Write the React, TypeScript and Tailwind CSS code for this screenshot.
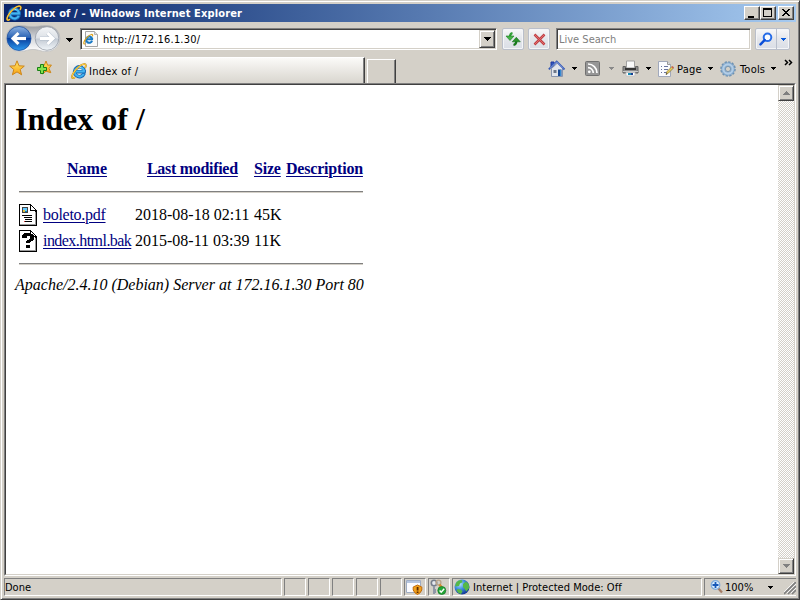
import React from "react";

const UI_BASE = "font-['DejaVu_Sans_Condensed','Noto_Sans',sans-serif] text-[11px] leading-[14px] whitespace-pre relative top-px";
const UI = `${UI_BASE} text-black`;

function IELogo({ size = 16, className = "" }: { size?: number; className?: string }) {
  return (
    <svg width={size} height={size} viewBox="0 0 16 16" className={`shrink-0 ${className}`}>
      <path d="M13.1 10.4A4.9 4.9 0 1 1 13.3 7.8L13.2 8.8H4.900" fill="none" stroke="#1769b5" strokeWidth="3.500" />
      <path d="M12.700 10.800A4.700 4.700 0 1 1 13 7.800L12.900 8.500H5" fill="none" stroke="#43b5f0" strokeWidth="2" />
      <path d="M5.100 6.200a3.500 3.500 0 0 1 5.200-1.500" fill="none" stroke="#a4e3ff" />
      <path d="M4 14.200C1.400 16.500 0 14.600 2.100 10.600 5 5.200 10.800.4 13.800 1.200c1.700.5 1 2.300.2 3.800" fill="none" stroke="#ae7a14" strokeWidth="1.800" />
      <path d="M4 14.200C1.400 16.500 0 14.600 2.100 10.600 5 5.200 10.800.4 13.800 1.200c1.700.5 1 2.300.2 3.800" fill="none" stroke="#ffd044" strokeWidth="1.100" />
    </svg>
  );
}

function PageLogo() {
  return (
    <svg width="16" height="16" viewBox="0 0 16 16" className="shrink-0">
      <path d="M2.500.5h9l3 3v12h-12z" fill="#fafafa" stroke="#a4a4a4" />
      <path d="M11.500.5v3h3" fill="#ddd" stroke="#b4b4b4" />
      <path d="M9.100 9.900A3.100 3.100 0 1 1 9.200 7.800l-.1.5H4" fill="none" stroke="#1979c5" strokeWidth="2" />
      <path d="M2.200 12.800C-.5 14 1 9.500 4 6.300 7.500 2.800 10.500 2.600 9.400 5.400" fill="none" stroke="#dea31b" strokeWidth="1.200" />
    </svg>
  );
}

function Arrow({ color = "#000", w = 7, className = "" }: { color?: string; w?: number; className?: string }) {
  const h = (w + 1) / 2;
  return (
    <svg width={w} height={h} viewBox={`0 0 ${w} ${h}`} className={`shrink-0 ${className}`} shapeRendering="crispEdges">
      <path d={`M0 0H${w}L${w / 2} ${h}z`} fill={color} />
    </svg>
  );
}

function NavButtons() {
  return (
    <svg width="56" height="30" viewBox="0 0 56 30" className="shrink-0">
      <defs>
        <linearGradient id="navBlue" x2="0" y2="1">
          <stop stopColor="#8cb1e1" /><stop offset=".47" stopColor="#2862b5" /><stop offset=".5" stopColor="#083f9e" /><stop offset="1" stopColor="#2e9cf0" />
        </linearGradient>
        <linearGradient id="navGray" x2="0" y2="1">
          <stop stopColor="#f3f5f7" /><stop offset=".48" stopColor="#dde1e6" /><stop offset=".52" stopColor="#c3cad3" /><stop offset="1" stopColor="#f1f6fa" />
        </linearGradient>
        <linearGradient id="navRim" x2="0" y2="1">
          <stop stopColor="#999b9f" /><stop offset=".5" stopColor="#d5d8dc" /><stop offset="1" stopColor="#fff" />
        </linearGradient>
      </defs>
      <path d="M14 1.500C21 1.500 22 2.500 28 2.500S35 1.500 42 1.500a13 13 0 0 1 0 26C35 27.500 34 25.500 28 25.500s-7 2-14 2a13 13 0 0 1 0-26z" fill="url(#navRim)" stroke="#b8b9ba" strokeWidth=".7" />
      <circle cx="14" cy="14.500" r="12" fill="url(#navBlue)" stroke="#1e4f9d" strokeWidth=".8" />
      <circle cx="42" cy="14.500" r="11.800" fill="url(#navGray)" stroke="#949ba4" strokeWidth=".8" />
      <path d="M21 14.500H8.500M13.500 9L8 14.500l5.500 5.500M35 14.500H47.500M42.500 9l5.500 5.500-5.500 5.500" fill="none" stroke="#8295af" strokeWidth="4" opacity=".35" />
      <path d="M21 14.500H9M13.500 9L8 14.500l5.500 5.500M35 14.500H47M42.500 9l5.500 5.500-5.500 5.500" fill="none" stroke="#fff" strokeWidth="3" />
    </svg>
  );
}

function Star({ add = false }: { add?: boolean }) {
  return (
    <svg width="16" height="16" viewBox="0 0 16 16" className="shrink-0">
      <defs><linearGradient id="gold" x2="0" y2="1"><stop stopColor="#ffe96a" /><stop offset="1" stopColor="#f8a010" /></linearGradient></defs>
      <path d={add ? "M10 1l1.600 4.200 3.800-.2-2.400 3.500 1.800 4.200-4.800-1.500L6.500 14 7 9.500 4 6l4.300-.8z" : "M8 .8l2 5 5.300.3-4.100 3.400 1.400 5.300L8 11.900l-4.600 2.900 1.400-5.300L.7 6.100 6 5.800z"} fill="url(#gold)" stroke="#cd861b" strokeLinejoin="round" />
      {add && <path d="M4.500 4.500h3v3h3v3h-3v3h-3v-3h-3v-3h3z" fill="#80e34d" stroke="#198016" />}
    </svg>
  );
}

function House() {
  return (
    <svg width="18" height="18" viewBox="0 0 18 18" className="shrink-0">
      <path d="M3 2h3v5H3z" fill="#3157c0" stroke="#2039a0" />
      <path d="M3.500 8.500L9.500 3l5 5v8.500h-11z" fill="#e2e5ec" stroke="#8995ad" />
      <path d="M.8 9.300L8.700 1.500l7.800 8" fill="none" stroke="#375bb6" strokeWidth="1.800" />
      <path d="M2 8.300L8.700 2l6.500 6.600" fill="none" stroke="#a9baec" strokeWidth=".7" />
      <path d="M5.500 10h3v3h-3z" fill="#6d7789" /><path d="M10 9.500h3.500V16H10z" fill="#164994" />
      <path d="M12 10h1v6h-1z" fill="#378bd2" />
    </svg>
  );
}

function Feed({ className = "" }: { className?: string }) {
  return (
    <svg width="15" height="15" viewBox="0 0 15 15" className={`shrink-0 ${className}`}>
      <rect x=".5" y=".5" width="14" height="14" rx="1" fill="#969696" stroke="#717171" />
      <circle cx="4.300" cy="10.800" r="1.400" fill="#fff" />
      <path d="M3 6.700a5.300 5.300 0 0 1 5.300 5.300M3 3a9 9 0 0 1 9 9" fill="none" stroke="#fff" strokeWidth="1.700" />
    </svg>
  );
}

function Printer({ className = "" }: { className?: string }) {
  return (
    <svg width="17" height="17" viewBox="0 0 17 17" className={`shrink-0 ${className}`}>
      <path d="M4.500 1h8v7h-8z" fill="#fafafa" stroke="#a1a1a1" />
      <path d="M1 6.500h2.500V9h10V6.500H16V13H1z" fill="#8c8c8c" stroke="#646464" />
      <path d="M3 8h11v2H3z" fill="#363636" /><path d="M1 11.500h15" stroke="#cacaca" />
      <path d="M4 12.500h9V16H4z" fill="#fff" stroke="#c2c2c2" />
      <path d="M6 13h3v2H6z" fill="#178db4" /><path d="M9 13h2v2H9z" fill="#1c3f91" />
    </svg>
  );
}

function PageEdit({ className = "" }: { className?: string }) {
  return (
    <svg width="16" height="16" viewBox="0 0 16 16" className={`shrink-0 ${className}`}>
      <path d="M.5.500h9l3 3v12h-12z" fill="#fafbff" stroke="#a1a9bc" /><path d="M9.500.500v3h3" fill="#ddd" stroke="#999" />
      <path d="M3 5.500h1m2 0h4M3 8.500h1m2 0h4M3 11.500h1m2 0h3" stroke="#69749c" />
      <path d="M8 13.500l1-3 5-5 1.500 1.500-5 5z" fill="#e8ce58" stroke="#8c7842" strokeWidth=".8" /><path d="M13.500 6L15 7.500l.8-1.300-1-1z" fill="#d8544a" /><path d="M8 13.500l.4-1.200.9.700z" fill="#222" />
    </svg>
  );
}

function Gear({ className = "" }: { className?: string }) {
  return (
    <svg width="16" height="16" viewBox="0 0 16 16" className={`shrink-0 ${className}`}>
      <circle cx="8" cy="8" r="6.800" fill="none" stroke="#6e90b0" strokeWidth="2" strokeDasharray="2.300 1.260" />
      <circle cx="8" cy="8" r="4.700" fill="#d4d0c8" stroke="#7fa6cb" strokeWidth="4" />
      <circle cx="8" cy="8" r="4.700" fill="none" stroke="#b3cde6" strokeWidth="2.200" />
      <circle cx="8" cy="8" r="2.600" fill="#d4d0c8" stroke="#6689aa" strokeWidth=".8" />
    </svg>
  );
}

function CaptionButton({ kind, className = "" }: { kind: "min" | "max" | "close"; className?: string }) {
  return (
    <div className={`w-4 h-3.5 bg-[#d4d0c8] border border-t-white border-l-white border-r-[#404040] border-b-[#404040] shadow-[inset_-1px_-1px_#808080] ${className}`}>
      <svg width="14" height="12" viewBox="0 0 14 12" shapeRendering="crispEdges" className="block">
        {kind === "min" && <path d="M3 9h6v2H3z" />}
        {kind === "max" && <path d="M2 1h9v9H2zM3 3v6h7V3z" fillRule="evenodd" />}
        {kind === "close" && <path d="M3 2h2v1h1v1h2V3h1V2h2v1h-1v1H9v1H8v1h1v1h1v1h1v1H9V8H8V7H6v1H5v1H3V8h1V7h1V6h1V5H5V4H4V3H3z" />}
      </svg>
    </div>
  );
}

function ClassicButton({ children, className = "h-4" }: { children?: React.ReactNode; className?: string }) {
  return <div className={`w-4 shrink-0 flex items-center justify-center bg-[#d4d0c8] border border-[#d4d0c8] border-r-[#404040] border-b-[#404040] shadow-[inset_1px_1px_#fff,inset_-1px_-1px_#808080] ${className}`}>{children}</div>;
}

const GLASS = "bg-linear-to-b from-[#f8f8f9] via-[#e4e6eb] via-50% to-[#dadee6] border border-[#babfca] rounded-[2px] shadow-[inset_0_0_0_1px_#f4f5f7]";

function FileIcon({ unknown = false }: { unknown?: boolean }) {
  return (
    <svg width="20" height="22" viewBox="0 0 20 22" shapeRendering="crispEdges" className="shrink-0">
      <path d="M1 0h12v1h1v1h1v1h1v1h1v1h1v1h1v16H1z" fill="#000" />
      <path d="M2 1h10v6h5v13H2z" fill="#fff" /><path d="M13 2v4h4V5h-1V4h-1V3h-1V2z" fill="#fff" />
      <path d="M2 20h16v1H2zM17 8h1v13h-1z" fill="#999" />
      {unknown ? (
        <path d="M6 3h7v1h2v1h1v5h-1v1h-2v1h-1v1H8v-2h1v-1h2V9h1V6H9v2H4V5h1V4h1zM8 15h4v3H8z" />
      ) : (
        <g><path d="M4 3h6v6H4z" fill="#444" /><path d="M5 4h4v3H5z" fill="#67caff" /><path d="M5 6h2v2H5z" fill="#e2c33f" /><path d="M7 7h2v1H7z" fill="#0879b0" /><path d="M4 11h10v1H4zM6 13h8v1H6zM7 15h7v1H7zM7 17h7v1H7z" /><path d="M6 17h1v1H6z" fill="#d33" /></g>
      )}
    </svg>
  );
}

const PANE = "h-[18px] shrink-0 border border-t-[#808080] border-l-[#808080] border-r-white border-b-white flex items-center";
const LINK = "text-[#000080] underline decoration-1 underline-offset-2 whitespace-nowrap justify-self-start";
const ROW = "grid grid-cols-[24px_92px_119px_32px_78px] whitespace-nowrap";

function TitleBar() {
  return (
    <div className="h-[18px] shrink-0 flex items-center bg-linear-to-r from-[#0a246a] to-[#a6caf0] pl-0.5 pr-0.5">
      <IELogo />
      <span className="ml-[2px] grow font-['DejaVu_Sans_Condensed','Noto_Sans',sans-serif] text-[11px] leading-[14px] font-bold text-white whitespace-pre tracking-[0.13px] relative top-px">Index of / - Windows Internet Explorer</span>
      <CaptionButton kind="min" /><CaptionButton kind="max" /><CaptionButton kind="close" className="ml-0.5" />
    </div>
  );
}

function AddressRow() {
  return (
    <div className="h-8 shrink-0 flex items-start pl-px pt-[2px]">
      <NavButtons />
      <Arrow className="mt-[14px] ml-[5px]" />
      <div className="ml-[7px] mt-[4px] w-[417px] h-[22px] flex items-center bg-white border border-t-[#808080] border-l-[#808080] border-r-white border-b-white shadow-[inset_1px_1px_#404040,inset_-1px_-1px_#d4d0c8] pl-[2px] pr-px">
        <PageLogo />
        <span className={`${UI} ml-1 grow tracking-[0.2px]`}>http://172.16.1.30/</span>
        <ClassicButton className="h-[18px]"><Arrow /></ClassicButton>
      </div>
      <div className={`ml-[5px] mt-[4px] w-[22px] h-[22px] flex items-center justify-center ${GLASS}`}>
        <svg width="16" height="16" viewBox="0 0 16 16">
          <path d="M7.500 2Q5 2.500 5 6" fill="none" stroke="#2f9e35" strokeWidth="2.200" />
          <path d="M1 5h8l-4 4.500z" fill="#45b545" stroke="#187a20" strokeWidth=".6" />
          <path d="M8.500 14Q11.300 13.500 11.300 10" fill="none" stroke="#17781d" strokeWidth="2.200" />
          <path d="M7.300 10.800h8l-4-4.500z" fill="#2b932b" stroke="#116b1d" strokeWidth=".6" />
        </svg>
      </div>
      <div className={`ml-1 mt-[4px] w-[22px] h-[22px] flex items-center justify-center ${GLASS}`}>
        <svg width="13" height="13" viewBox="0 0 13 13"><path d="M1.500 1.500l10 10m0-10l-10 10" stroke="#bd4147" strokeWidth="2.500" /><path d="M1.500 1.500l10 10m0-10l-10 10" stroke="#e56a6a" strokeWidth="1" /></svg>
      </div>
      <div className="ml-1.5 mt-[4px] w-[195px] h-[22px] flex items-center bg-white border border-t-[#808080] border-l-[#808080] border-r-white border-b-white shadow-[inset_1px_1px_#404040,inset_-1px_-1px_#d4d0c8] pl-[2px]">
        <span className={`${UI_BASE} text-[#808080]`}>Live Search</span>
      </div>
      <div className={`ml-1 mt-[4px] w-[35px] h-[22px] flex ${GLASS}`}>
        <div className="w-[21px] h-full flex items-center justify-center border-r border-[#b8bfcc]">
          <svg width="14" height="14" viewBox="0 0 14 14"><circle cx="8.500" cy="5.300" r="3.800" fill="#f8fbff" stroke="#266ce7" strokeWidth="2" /><path d="M5.600 8.200L1.500 12.300" stroke="#0a4ed8" strokeWidth="2.500" strokeLinecap="round" /></svg>
        </div>
        <div className="grow flex items-center justify-center"><Arrow w={5} color="#0759dc" /></div>
      </div>
    </div>
  );
}

function TabRow() {
  return (
    <div className="h-[29px] shrink-0 flex items-start pl-[5px]">
      <div className="pt-[6px]"><Star /></div>
      <div className="pt-[6px] ml-[11px]"><Star add /></div>
      <div className="ml-[15px] mt-[3px] w-[298px] h-[26px] flex items-center bg-linear-to-b from-[#fbfaf8] to-[#d9d6cf] border-t border-l border-white border-r border-r-[#404040] shadow-[inset_-1px_0_#808080] pl-[3px] pt-px">
        <IELogo /><span className={`${UI} ml-0.5 tracking-[0.3px]`}>Index of /</span>
      </div>
      <div className="ml-[2px] mt-[5px] w-[29px] h-[24px] border-t border-l border-white border-r border-r-[#404040] shadow-[inset_-1px_0_#808080] bg-[#d4d0c8]" />
      <div className="grow flex items-center h-[29px] justify-end pr-[3px]">
        <House /><Arrow w={5} className="ml-[6px]" />
        <Feed className="ml-[8px]" /><Arrow w={5} color="#898989" className="ml-[9px]" />
        <Printer className="ml-[8px]" /><Arrow w={5} className="ml-[7px]" />
        <PageEdit className="ml-[7px]" /><span className={`${UI} ml-[3px] w-[25px] tracking-[0.2px]`}>Page</span><Arrow w={5} className="ml-[6px]" />
        <Gear className="ml-[7px]" /><span className={`${UI} ml-[4px] w-[26px] tracking-[0.2px]`}>Tools</span><Arrow w={5} className="ml-[5px]" />
        <svg width="9" height="7" viewBox="0 0 9 7" className="ml-[8px] mb-[13px]"><path d="M1 1l2.500 2.500L1 6m4-5l2.500 2.500L5 6" fill="none" stroke="#000" strokeWidth="1.500" /></svg>
      </div>
    </div>
  );
}

function Listing() {
  return (
    <div className="grow bg-white text-black font-['Liberation_Serif',serif] text-[16px] leading-[18px] pl-[9px]">
      <h1 className="mt-[15px] h-[38px] text-[32px] leading-[38px] font-bold">Index of /</h1>
      <div className={`${ROW} font-bold ml-[4px] mt-[22px]`}>
        <span /><a className={`${LINK} ml-6`}>Name</a><a className={`${LINK} ml-3 tracking-[-0.3px]`}>Last modified</a><a className={`${LINK} tracking-[-0.2px]`}>Size</a><a className={`${LINK} tracking-[-0.2px]`}>Description</a>
      </div>
      <div className="ml-[4px] mt-[13px] w-[344px] h-[2px] border-t border-t-[#808080] border-b border-b-[#d4d0c8]" />
      <div className={`${ROW} ml-[3px] mt-[11px] h-[22px] items-center`}>
        <FileIcon /><a className={`${LINK} ml-px tracking-[-0.28px]`}>boleto.pdf</a><span className="ml-px">2018-08-18 02:11</span><span className="ml-px">45K</span>
      </div>
      <div className={`${ROW} ml-[3px] mt-1 h-[22px] items-center`}>
        <FileIcon unknown /><a className={`${LINK} ml-px tracking-[-0.55px]`}>index.html.bak</a><span className="ml-px">2015-08-11 03:39</span><span className="ml-px">11K</span>
      </div>
      <div className="ml-[4px] mt-[11px] w-[344px] h-[2px] border-t border-t-[#808080] border-b border-b-[#d4d0c8]" />
      <address className="italic mt-[11px] whitespace-nowrap">Apache/2.4.10 (Debian) Server at 172.16.1.30 Port 80</address>
    </div>
  );
}

function StatusBar() {
  return (
    <div className="h-[22px] shrink-0 pt-[2px] flex gap-[2px]">
      <div className={`${PANE} w-[278px]`}><span className={UI}>Done</span></div>
      {[0, 1, 2, 3, 4].map((i) => <div key={i} className={`${PANE} w-[22px]`} />)}
      <div className={`${PANE} w-[22px]`}>
        <svg width="19" height="16" viewBox="0 0 19 16" className="shrink-0"><path d="M1.500 1.500h14v12h-14z" fill="#fcfcff" stroke="#9fadc4" /><path d="M2 2h13v2H2z" fill="#b7c6df" /><path d="M12.500 6l4.300 2v3q-1 3-4.300 4.500-3.300-1.500-4.300-4.500V8z" fill="#f0a01b" stroke="#c16a0a" /><path d="M11.700 8h1.800v3.500h-1.800zM11.700 12.500h1.800V14h-1.800z" fill="#5c2900" /></svg>
      </div>
      <div className={`${PANE} w-[22px]`}>
        <svg width="18" height="16" viewBox="0 0 18 16" className="shrink-0"><circle cx="5" cy="4" r="2.700" fill="#e5e8ef" stroke="#777e8d" strokeWidth="1.600" /><path d="M5 7v8m0-4h2m-2 2h2" stroke="#8f96a6" strokeWidth="1.900" /><circle cx="9.500" cy="3.500" r="2.400" fill="none" stroke="#b9a48c" strokeWidth="1.400" /><path d="M10.500 5.500l3.500 5" stroke="#d28d31" strokeWidth="2.600" /><circle cx="12.800" cy="11.500" r="4" fill="#24a638" stroke="#137523" strokeWidth=".7" /><path d="M10.600 11.500l1.600 1.700 3-3.500" fill="none" stroke="#fff" strokeWidth="1.400" /></svg>
      </div>
      <div className={`${PANE} w-[250px] pl-px`}>
        <svg width="16" height="16" viewBox="0 0 16 16" className="shrink-0"><defs><radialGradient id="globe" cx=".35" cy=".3" r=".7"><stop stopColor="#b9e5ff" /><stop offset=".5" stopColor="#3f8fe0" /><stop offset="1" stopColor="#163c98" /></radialGradient></defs><circle cx="8" cy="8" r="7.500" fill="url(#globe)" /><path d="M2.500 3q3-2.500 5.500-1.800l.5 2-2.500 1.300-1 2.500-3.500.5-.3-1zM9 5l3-2.500 2.700 2.500.6 4-3 3.500-2-3L9 8zM3.500 10l3.500.5 1.500 2-1.500 2.500Q3.500 14 2.500 11.500z" fill="#56b847" /></svg>
        <span className={`${UI} ml-[3px] tracking-[0.04px]`}>Internet | Protected Mode: Off</span>
      </div>
      <div className={`${PANE} w-[92px] pl-[5px] border-r-0`}>
        <svg width="13" height="14" viewBox="0 0 13 14" className="shrink-0"><path d="M8 8l4 4.500" stroke="#a47b63" strokeWidth="2.200" /><circle cx="5.500" cy="5" r="4.300" fill="#d9edff" stroke="#7eacdc" strokeWidth="1.200" /><path d="M5.500 2v6M2.500 5h6" stroke="#1658b7" strokeWidth="1.800" /></svg>
        <span className={`${UI} ml-[2px] w-[30px]`}>100%</span><Arrow w={5} className="ml-[13px]" />
        <svg width="12" height="13" viewBox="0 0 12 13" className="ml-auto self-end"><path d="M0 12L12 0M4 12l8-8M8 12l4-4" stroke="#808080" strokeWidth="1.700" /><path d="M-1 11L11-1M3 11l9-9M7 11l5-5" stroke="#fff" strokeWidth=".8" /></svg>
      </div>
    </div>
  );
}

export default function App() {
  return (
    <main className="w-[800px] h-[600px] overflow-hidden bg-[#d4d0c8] border border-[#d4d0c8] border-r-[#404040] border-b-[#404040] shadow-[inset_1px_1px_#fff,inset_-1px_-1px_#808080] px-[3px] pt-[3px] pb-px flex flex-col">
      <TitleBar /><AddressRow /><TabRow />
      <div className="h-[493px] shrink-0 border border-t-[#808080] border-l-[#808080] border-r-white border-b-white">
        <div className="h-full border border-t-[#404040] border-l-[#404040] border-r-[#d4d0c8] border-b-[#d4d0c8] flex">
          <Listing />
          <div className="w-4 shrink-0 flex flex-col justify-between bg-[repeating-conic-gradient(#fff_0_25%,#d4d0c8_0_50%)] bg-[length:2px_2px]">
            <ClassicButton><Arrow color="#808080" className="rotate-180" /></ClassicButton><ClassicButton><Arrow color="#808080" /></ClassicButton>
          </div>
        </div>
      </div>
      <StatusBar />
    </main>
  );
}
